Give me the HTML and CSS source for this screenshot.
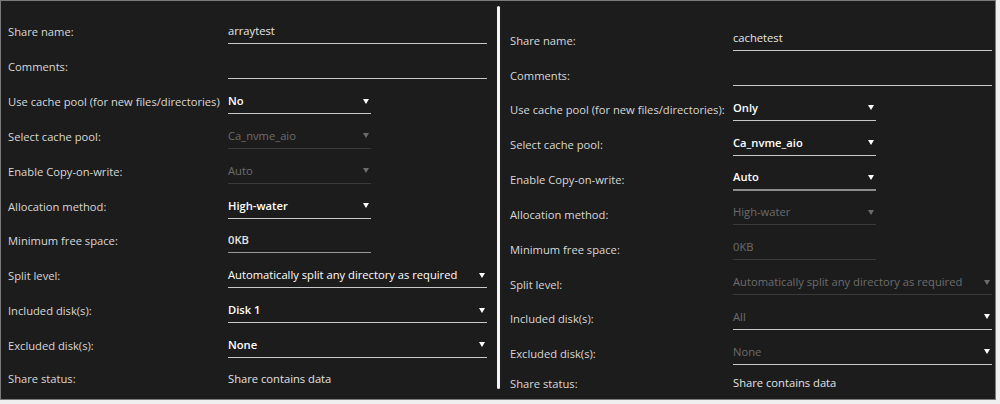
FILE: index.html
```html
<!DOCTYPE html>
<html lang="en">
<head>
    <meta charset="UTF-8">
    <meta name="viewport" content="width=device-width, initial-scale=1.0">
    <title>Share Settings</title>
    <link rel="stylesheet" href="styles.css">
</head>
<body>
    <div class="frame">
        <!-- array share -->
        <div class="panel panel-left">
            <div class="row">
                <div class="label">Share name:</div>
                <div class="field field-wide field-text">arraytest</div>
            </div>
            <div class="row">
                <div class="label">Comments:</div>
                <div class="field field-wide field-text"></div>
            </div>
            <div class="row">
                <div class="label">Use cache pool (for new files/directories)</div>
                <div class="field select strong">No<span class="arrow"></span></div>
            </div>
            <div class="row">
                <div class="label">Select cache pool:</div>
                <div class="field select disabled">Ca_nvme_aio<span class="arrow"></span></div>
            </div>
            <div class="row">
                <div class="label">Enable Copy-on-write:</div>
                <div class="field select disabled">Auto<span class="arrow"></span></div>
            </div>
            <div class="row">
                <div class="label">Allocation method:</div>
                <div class="field select strong">High-water<span class="arrow"></span></div>
            </div>
            <div class="row">
                <div class="label">Minimum free space:</div>
                <div class="field field-text field-soft strong">0KB</div>
            </div>
            <div class="row">
                <div class="label">Split level:</div>
                <div class="field field-wide select">Automatically split any directory as required<span class="arrow"></span></div>
            </div>
            <div class="row">
                <div class="label">Included disk(s):</div>
                <div class="field field-wide select strong">Disk 1<span class="arrow"></span></div>
            </div>
            <div class="row">
                <div class="label">Excluded disk(s):</div>
                <div class="field field-wide select strong">None<span class="arrow"></span></div>
            </div>
            <div class="row row-status">
                <div class="label">Share status:</div>
                <div class="status">Share contains data</div>
            </div>
        </div>

        <div class="divider"></div>

        <!-- cache share -->
        <div class="panel panel-right">
            <div class="row">
                <div class="label">Share name:</div>
                <div class="field field-wide field-text">cachetest</div>
            </div>
            <div class="row">
                <div class="label">Comments:</div>
                <div class="field field-wide field-text"></div>
            </div>
            <div class="row">
                <div class="label">Use cache pool (for new files/directories):</div>
                <div class="field select strong">Only<span class="arrow"></span></div>
            </div>
            <div class="row">
                <div class="label">Select cache pool:</div>
                <div class="field select strong">Ca_nvme_aio<span class="arrow"></span></div>
            </div>
            <div class="row">
                <div class="label">Enable Copy-on-write:</div>
                <div class="field select strong focus">Auto<span class="arrow"></span></div>
            </div>
            <div class="row">
                <div class="label">Allocation method:</div>
                <div class="field select disabled">High-water<span class="arrow"></span></div>
            </div>
            <div class="row">
                <div class="label">Minimum free space:</div>
                <div class="field field-text disabled">0KB</div>
            </div>
            <div class="row">
                <div class="label">Split level:</div>
                <div class="field field-wide select disabled">Automatically split any directory as required<span class="arrow"></span></div>
            </div>
            <div class="row">
                <div class="label">Included disk(s):</div>
                <div class="field field-wide select muted">All<span class="arrow"></span></div>
            </div>
            <div class="row">
                <div class="label">Excluded disk(s):</div>
                <div class="field field-wide select muted">None<span class="arrow"></span></div>
            </div>
            <div class="row row-status">
                <div class="label">Share status:</div>
                <div class="status">Share contains data</div>
            </div>
        </div>
    </div>
</body>
</html>
```

FILE: styles.css
```css
body {
    margin: 0;
    background-color: #efefef;
    font-family: 'Open Sans', 'Liberation Sans', sans-serif;
    font-size: 11.2px;
    color: #d8d8d8;
}

.frame {
    display: flex;
    width: 994px;
    height: 398px;
    border: 1px solid #7a7a7a;
    background-color: #1c1c1c;
}

.panel {
    display: flex;
    flex-direction: column;
    box-sizing: border-box;
}

.panel-left {
    width: 496px;
    padding: 13.4px 0 0 7px;
}

.panel-right {
    flex: 1;
    padding: 20.3px 0 0 10px;
}

.divider {
    width: 3px;
    margin: 5px 0 10px;
    border-radius: 2px;
    background-color: #f4f4f4;
}

.row {
    display: grid;
    grid-template-columns: 220px auto;
    align-items: center;
    height: 34.85px;
}

    .panel-right .row {
        grid-template-columns: 223px auto;
    }

    .panel-right .label {
        padding-top: 3px;
    }

.row-status {
    height: 31px;
}

    .panel-right .row-status {
        height: 25px;
    }

.label {
    white-space: nowrap;
}

.field {
    display: flex;
    justify-content: space-between;
    align-items: center;
    width: 143px;
    height: 16px;
    padding: 4px 0;
    line-height: 16px;
    border-bottom: 1px solid #c8c8c8;
    color: #f2f2f2;
    white-space: nowrap;
}

.field-wide {
    width: 259px;
}

.field-text {
    color: #e6e6e6;
}

.field-soft {
    border-bottom-color: #9a9a9a;
}

.select {
    color: #ffffff;
}

    .select.focus {
        border-bottom: 2px solid #8c8c8c;
    }

.strong {
    font-weight: 600;
}

.arrow {
    width: 0;
    height: 0;
    margin-right: 2px;
    border-left: 3px solid transparent;
    border-right: 3px solid transparent;
    border-top: 5px solid #ffffff;
}

.disabled {
    color: #6c6c6c;
    border-bottom-color: #3a3a3a;
}

    .disabled .arrow {
        border-top-color: #6c6c6c;
    }

.muted {
    color: #6c6c6c;
}

.status {
    color: #e2e2e2;
}
```
